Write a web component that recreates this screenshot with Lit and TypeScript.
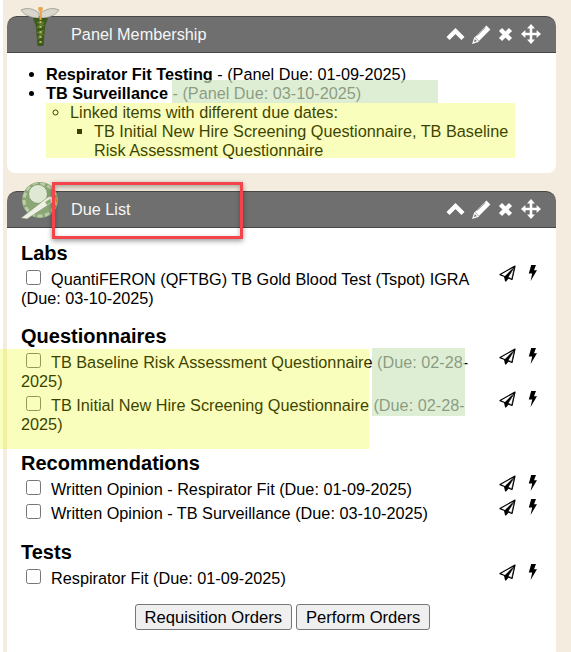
import { LitElement, html, css, svg } from 'lit'
import { customElement } from 'lit/decorators.js'

const headerIcons = html`
  <div class="tools">
    <svg width="19" height="19" viewBox="0 0 19 19"><path d="M2 13.5 9.5 6 17 13.5" fill="none" stroke="#fff" stroke-width="4.4" /></svg>
    <svg width="19" height="19" viewBox="0 0 19 19">
      <path d="M14.4.6 18.4 4.6 7 16 3 12Z" fill="#fff" />
      <path d="M5.1 10.6 13.2 2.5" stroke="#6f6f6f" stroke-width=".8" />
      <path d="M2.6 13 6 16.4 1 18Z" fill="none" stroke="#fff" stroke-width="1.2" />
    </svg>
    <svg width="15" height="15" viewBox="0 0 15 15"><path d="M2.5 2.5 12.5 12.5M12.5 2.5 2.5 12.5" stroke="#fff" stroke-width="4.4" /></svg>
    <svg class="move" width="20" height="20" viewBox="0 0 20 20">
      <path d="M3 10H17M10 3V17" stroke="#fff" stroke-width="2.6" />
      <path d="M10 0 14 4.4H6ZM10 20 6 15.6H14ZM0 10 4.4 6V14ZM20 10 15.6 14V6Z" fill="#fff" />
    </svg>
  </div>
`

const plane = svg`<svg width="17" height="17" viewBox="0 0 17 17">
  <path d="M16 1 1 9.6l4.6 1.9L6.6 16l2.6-3 3.8 1.5Z" fill="#fff" stroke="#000" stroke-width="1.2" stroke-linejoin="round" />
  <path d="M15.5 1.500 5.600 11.500 6.600 16l2.200-2.800Z" fill="#000" />
  <path d="M15.5 2 9 12.200l3.800 1.700Z" fill="#fff" stroke="#000" stroke-width=".8" />
</svg>`

const bolt = svg`<svg width="9" height="16" viewBox="0 0 9 16"><path d="M3.2 0H8L6 5.2h3L2.6 16l1.6-7.6H.8Z" fill="#000" /></svg>`

type Group = { title: string; items: string[] }

const groups: Group[] = [
  { title: 'Labs', items: ['QuantiFERON (QFTBG) TB Gold Blood Test (Tspot) IGRA (Due: 03-10-2025)'] },
  {
    title: 'Questionnaires',
    items: [
      'TB Baseline Risk Assessment Questionnaire (Due: 02-28-2025)',
      'TB Initial New Hire Screening Questionnaire (Due: 02-28-2025)',
    ],
  },
  {
    title: 'Recommendations',
    items: ['Written Opinion - Respirator Fit (Due: 01-09-2025)', 'Written Opinion - TB Surveillance (Due: 03-10-2025)'],
  },
  { title: 'Tests', items: ['Respirator Fit (Due: 01-09-2025)'] },
]

@customElement('app-root')
export class AppRoot extends LitElement {
  static styles = css`
    :host {
      display: block;
      position: relative;
      height: 652px;
      overflow: hidden;
      background: #fff;
      padding-left: 3px;
      font-family: 'Liberation Sans', Arial, sans-serif;
      font-size: 16.25px;
      line-height: 19px;
      color: #000;
      box-sizing: border-box;
    }
    .page {
      background: #f3ecdf;
      height: 652px;
      box-sizing: border-box;
      padding: 16px 15px 0 4px;
      display: flex;
      flex-direction: column;
      gap: 18px;
    }
    .panel {
      position: relative;
      background: #fff;
      border-radius: 10px 10px 8px 8px;
    }
    .panel.grow {
      flex: 1;
      border-radius: 10px 10px 0 0;
    }
    .head {
      height: 37px;
      box-sizing: border-box;
      background: #6f6f6f;
      border: 1px solid #474747;
      border-width: 1px 0 1px 0;
      border-radius: 10px 10px 0 0;
      padding: 0 15px 0 64px;
      display: flex;
      align-items: center;
      justify-content: space-between;
      color: #f6f6f6;
    }
    .tools {
      display: flex;
      align-items: center;
      gap: 7px;
    }
    .tools .move {
      margin: 0 0 2px 1px;
    }
    .badge {
      position: absolute;
      left: 12px;
      top: -9px;
    }
    .membership {
      padding: 12px 41px 13px 15px;
    }
    ul {
      margin: 0;
      padding-left: 24px;
    }
    .due {
      padding: 14px 14px 0;
    }
    .due h3 {
      margin: 0 0 5px;
      font-size: 20px;
      line-height: 23px;
      font-weight: bold;
    }
    .group {
      margin-bottom: 17.5px;
    }
    .group:first-child {
      margin-bottom: 16.5px;
    }
    .group:nth-child(2) {
      margin-bottom: 18.5px;
    }
    .row {
      display: grid;
      grid-template-columns: 454px 1fr;
      margin-bottom: 5px;
    }
    .row input {
      width: 15px;
      height: 15px;
      margin: 0 10px 0 5px;
      vertical-align: top;
    }
    .acts {
      display: flex;
      gap: 12px;
      padding-left: 24px;
      margin-top: -5px;
    }
    .acts svg {
      display: block;
    }
    .actions {
      display: flex;
      justify-content: center;
      gap: 4px;
      margin-top: -1px;
      padding-left: 2px;
    }
    button {
      font: inherit;
      font-size: 16.6px;
      height: 26px;
      padding: 0 9px;
      background: #efefef;
      border: 1px solid #767676;
      border-radius: 3px;
      color: #000;
    }
    .mark {
      position: absolute;
    }
    .yellow {
      background: rgba(230, 250, 0, 0.26);
    }
    .green {
      background: rgba(206, 230, 191, 0.67);
    }
    .m1 { left: 172px; top: 80px; width: 266px; height: 23px; }
    .m2 { left: 46px; top: 103px; width: 469px; height: 55px; }
    .m3 { left: 0; top: 349px; width: 369px; height: 100px; }
    .m4 { left: 372px; top: 348px; width: 93px; height: 68px; }
    .callout {
      position: absolute;
      left: 52px;
      top: 182px;
      width: 191px;
      height: 57px;
      box-sizing: border-box;
      border: 3px solid #f2444a;
      box-shadow: 0 2px 5px rgba(0, 0, 0, 0.4), inset 0 2px 5px rgba(0, 0, 0, 0.3);
    }
  `

  renderRow(label: string) {
    return html`
      <div class="row">
        <div><input type="checkbox" />${label}</div>
        <div class="acts">${plane}${bolt}</div>
      </div>
    `
  }

  render() {
    return html`
      <div class="page">
        <section class="panel">
          <div class="head"><span>Panel Membership</span>${headerIcons}</div>
          <svg class="badge" width="42" height="42" viewBox="0 0 42 42">
            <path d="M2 3C9 0 15 2 20 6V11C13 11 6 9 2 3ZM40 3C33 0 27 2 22 6V11C29 11 36 9 40 3Z" fill="#d8d6cd" stroke="#8e8c80" stroke-width=".7" />
            <path d="M14 11H29C28 15 26 17 26 21 25.500 27 25 33 24.500 39H18.500C18 33 17.500 27 17 21 17 17 15 15 14 11Z" fill="#3b5a1b" />
            <path d="M18 15 25 19M25 15 18 21M18 25 25 28M24 23 19 32" stroke="#5f7a2c" stroke-width="1.8" />
            <path d="M21.500 14V38" stroke="#b8b45a" stroke-width="2.200" stroke-dasharray="2 3" />
            <rect x="20.500" y="1" width="2" height="12" fill="#e8a64a" />
            <circle cx="21.500" cy="2" r="2.400" fill="#e8a64a" />
          </svg>
          <div class="membership">
            <ul>
              <li><b>Respirator Fit Testing</b> - (Panel Due: 01-09-2025)</li>
              <li>
                <b>TB Surveillance</b> - (Panel Due: 03-10-2025)
                <ul>
                  <li>
                    Linked items with different due dates:
                    <ul>
                      <li>TB Initial New Hire Screening Questionnaire, TB Baseline Risk Assessment Questionnaire</li>
                    </ul>
                  </li>
                </ul>
              </li>
            </ul>
          </div>
        </section>
        <section class="panel grow">
          <div class="head"><span>Due List</span>${headerIcons}</div>
          <svg class="badge" width="42" height="42" viewBox="0 0 42 42">
            <circle cx="21" cy="18" r="18" fill="#8ba776" />
            <circle cx="21" cy="18" r="16" fill="none" stroke="#bccdaa" stroke-width="3" stroke-dasharray="5 2.500" />
            <circle cx="19" cy="12" r="9.500" fill="#dfe8d2" stroke="#7f9a68" />
            <path d="M2 36 29 15C33 13 36 16 34 20L8 37Z" fill="#eef0e6" stroke="#7b8f68" stroke-width=".6" />
            <path d="M26 20 31 17 32 20 28 23Z" fill="#8fb070" />
            <path d="M36 14 39 18 37 22Z" fill="#d98c32" />
          </svg>
          <div class="due">
            ${groups.map(
              (g) => html`
                <div class="group">
                  <h3>${g.title}</h3>
                  ${g.items.map((i) => this.renderRow(i))}
                </div>
              `,
            )}
            <div class="actions">
              <button>Requisition Orders</button>
              <button>Perform Orders</button>
            </div>
          </div>
        </section>
      </div>
      <div class="mark green m1"></div>
      <div class="mark yellow m2"></div>
      <div class="mark yellow m3"></div>
      <div class="mark green m4"></div>
      <div class="callout"></div>
    `
  }
}
